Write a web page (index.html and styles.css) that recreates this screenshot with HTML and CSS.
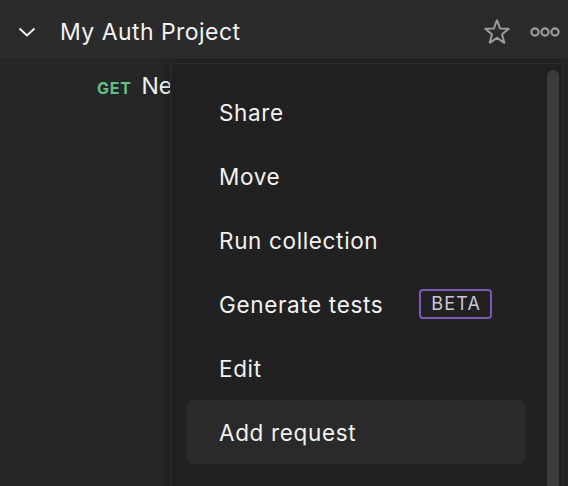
FILE: index.html
```html
<!DOCTYPE html>
<html>
<head>
<meta charset="utf-8">
<link rel="stylesheet" href="styles.css">
</head>
<body>
<div class="app">
  <div class="header">
    <svg class="chev" width="18" height="12" viewBox="0 0 18 12"><path d="M1.5 2.5 L9 9.5 L16.5 2.5" fill="none" stroke="#f2f2f2" stroke-width="2"/></svg>
    <div class="title">My Auth Project</div>
    <div class="actions">
      <svg class="star" width="28" height="28" viewBox="0 0 28 28"><path d="M14 2.2 L17.1 10.5 L25.8 10.8 L19 16.2 L21.3 24.8 L14 19.8 L6.7 24.8 L9 16.2 L2.2 10.8 L10.9 10.5 Z" fill="none" stroke="#9c9c9c" stroke-width="2" stroke-linejoin="round"/></svg>
      <svg class="dots" width="30" height="12" viewBox="0 0 30 12"><circle cx="5" cy="6" r="3.6" fill="none" stroke="#9c9c9c" stroke-width="2.2"/><circle cx="15" cy="6" r="3.6" fill="none" stroke="#9c9c9c" stroke-width="2.2"/><circle cx="25" cy="6" r="3.6" fill="none" stroke="#9c9c9c" stroke-width="2.2"/></svg>
    </div>
  </div>
  <div class="body">
    <div class="request"><span class="method">GET</span><span class="rname">New Request</span></div>
    <div class="menu">
      <div class="list">
        <div class="item">Share</div>
        <div class="item">Move</div>
        <div class="item">Run collection</div>
        <div class="item">Generate tests <span class="beta">BETA</span></div>
        <div class="item">Edit</div>
        <div class="item hover">Add request</div>
      </div>
      <div class="scroll"><div class="thumb"></div></div>
    </div>
  </div>
</div>
</body>
</html>
```
FILE: styles.css
```css
html, body {
  margin: 0;
  padding: 0;
  background: #262626;
  font-family: Inter, "Noto Sans", sans-serif;
  overflow: hidden;
}
.app {
  width: 568px;
  height: 486px;
  display: flex;
  flex-direction: column;
  overflow: hidden;
}
.header {
  flex: none;
  background: #2b2b2b;
  border-bottom: 1px solid #222;
  display: flex;
  align-items: center;
  padding: 4px 8px 0 18px;
  box-sizing: border-box;
  height: 60px;
}
.chev { margin-top: 1px; }
.title {
  color: #f2f2f2;
  font-size: 23px;
  margin-left: 24px;
  flex: 1;
  letter-spacing: 0.45px;
}
.actions {
  display: flex;
  align-items: center;
  gap: 19px;
}
.star { margin-left: -3px; }
.body {
  position: relative;
  flex: 1;
  background: #262626;
}
.request {
  padding-left: 97px;
  padding-top: 12px;
  display: flex;
  align-items: baseline;
  gap: 10px;
}
.method {
  color: #5fc08b;
  font-weight: 700;
  font-size: 16px;
  letter-spacing: 0.7px;
}
.rname {
  color: #f2f2f2;
  font-size: 23px;
}
.menu {
  position: absolute;
  left: 170px;
  top: 3px;
  width: 394px;
  height: 440px;
  background: #212121;
  border: 1px solid #2e2e2e;
  border-radius: 6px 6px 0 0;
  box-shadow: 0 2px 8px rgba(0,0,0,0.35);
  display: flex;
  box-sizing: border-box;
  overflow: hidden;
}
.list {
  padding: 16px 0 0 15px;
  width: 340px;
  flex: none;
  display: flex;
  flex-direction: column;
}
.item {
  height: 64px;
  display: flex;
  align-items: center;
  padding-left: 33px;
  color: #f2f2f2;
  font-size: 22.5px;
  border-radius: 8px;
  letter-spacing: 0.65px;
  white-space: nowrap;
}
.item.hover { background: #2a2a2a; }
.beta {
  margin-left: 36px;
  border: 2px solid #7a58b4;
  border-radius: 4px;
  color: #cdc6d9;
  font-size: 18px;
  letter-spacing: 1.2px;
  padding: 2px 9px 2px 10px;
  line-height: 22px;
}
.scroll {
  margin-left: 21px;
  padding-top: 6px;
  width: 12px;
  flex: none;
}
.thumb {
  background: #3b3b3b;
  width: 12px;
  height: 100%;
  border-radius: 6px 6px 0 0;
}
```
